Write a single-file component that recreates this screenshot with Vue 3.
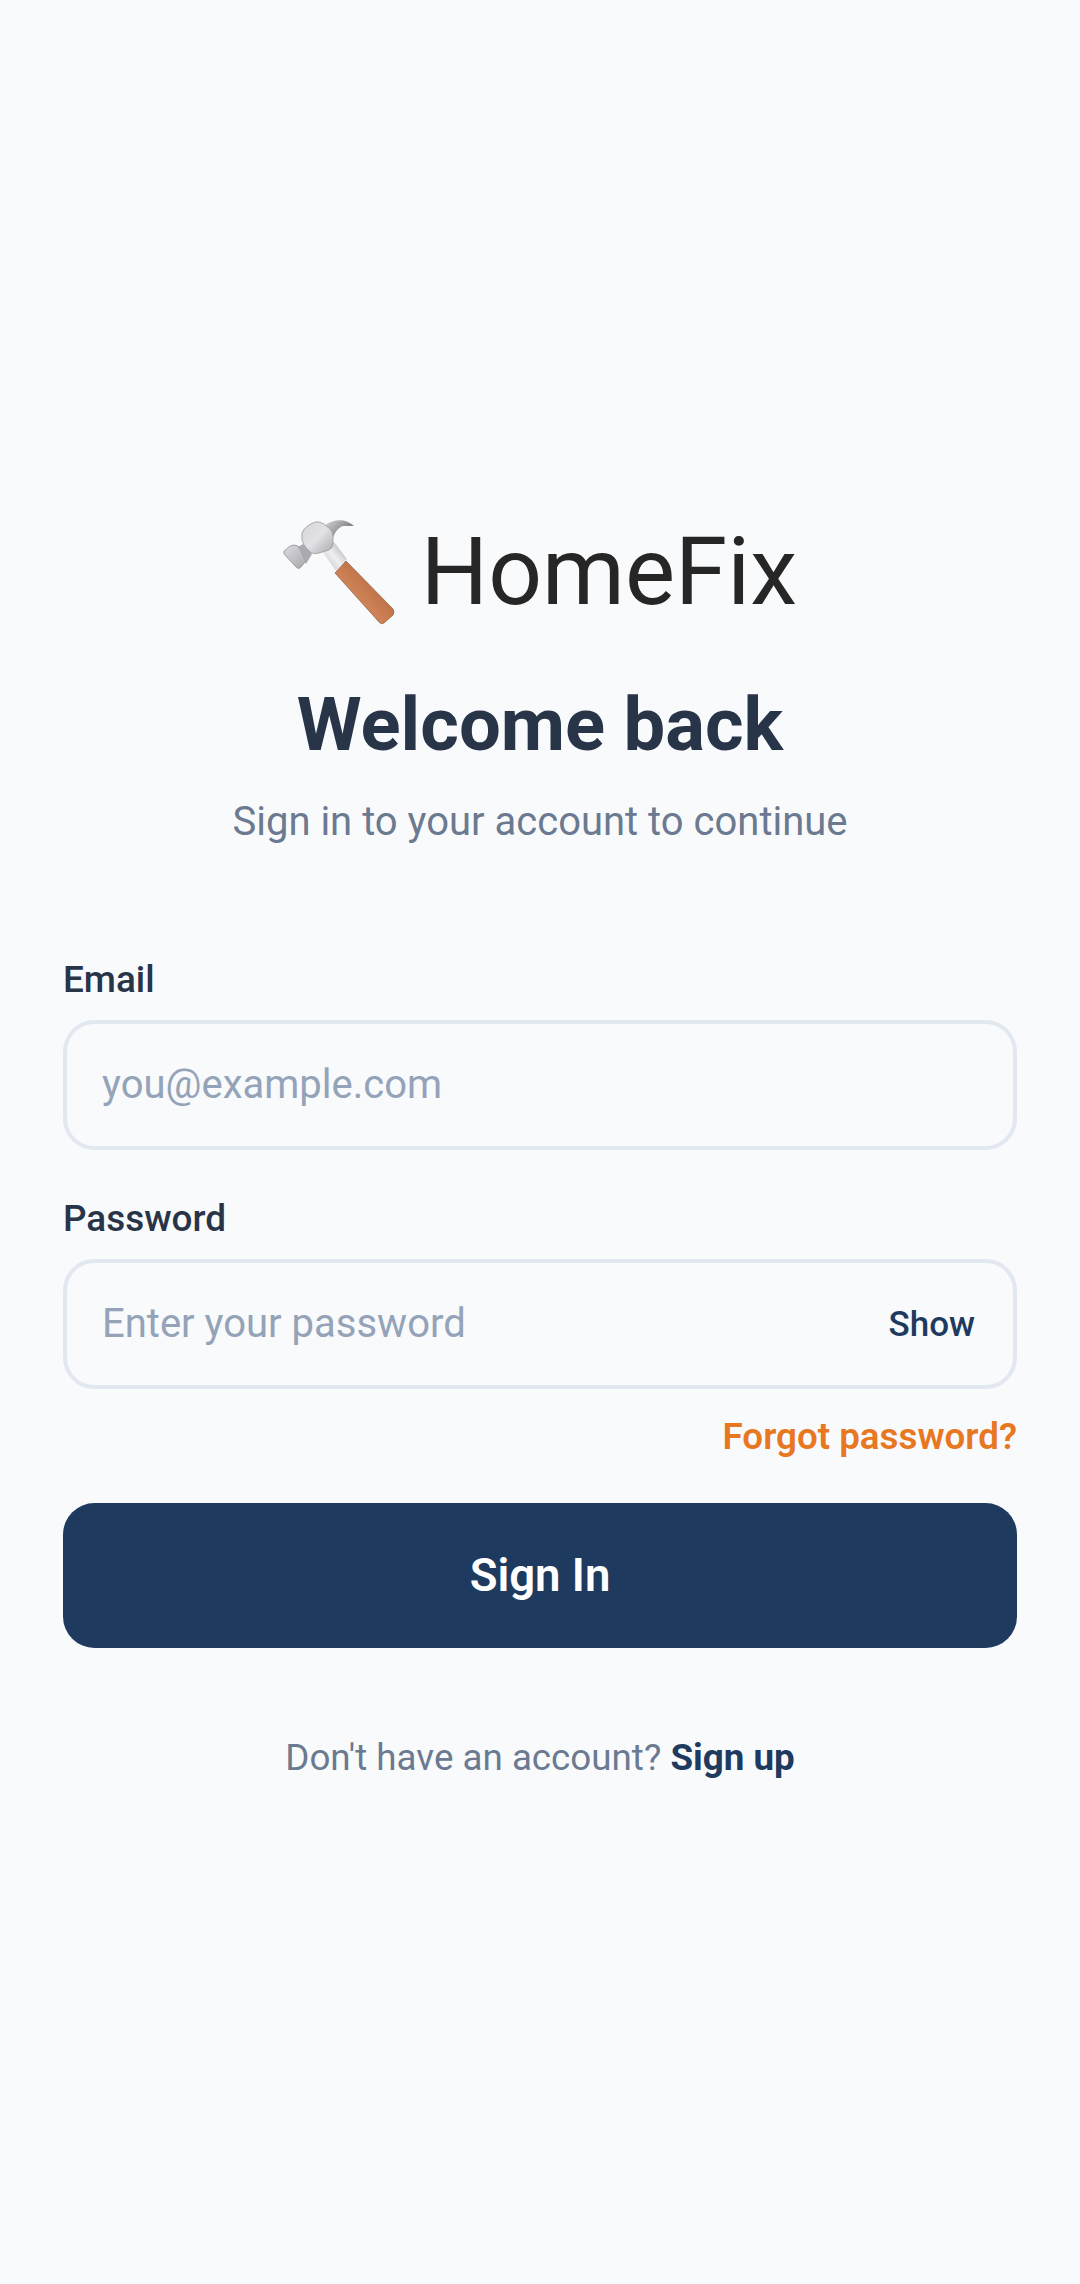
<template>
  <div class="login-page">
    <div class="brand">
      <svg class="brand-icon" viewBox="20 15 120 115" aria-hidden="true">
        <defs>
          <linearGradient id="wood" x1="0" y1="1" x2="1" y2="0">
            <stop offset="0" stop-color="#e3a078" />
            <stop offset="0.5" stop-color="#c97c50" />
            <stop offset="1" stop-color="#a05a36" />
          </linearGradient>
          <linearGradient id="steel" x1="0" y1="0" x2="1" y2="1">
            <stop offset="0" stop-color="#d6d6da" />
            <stop offset="0.5" stop-color="#e2e2e6" />
            <stop offset="1" stop-color="#a8a8ae" />
          </linearGradient>
          <linearGradient id="face" x1="0" y1="0" x2="1" y2="1">
            <stop offset="0" stop-color="#dcdce0" />
            <stop offset="1" stop-color="#a6a6ac" />
          </linearGradient>
          <linearGradient id="neck" x1="0" y1="1" x2="1" y2="0">
            <stop offset="0" stop-color="#bdbdc2" />
            <stop offset="0.5" stop-color="#efeff1" />
            <stop offset="1" stop-color="#9f9fa5" />
          </linearGradient>
          <linearGradient id="claw" x1="0" y1="0" x2="1" y2="0.6">
            <stop offset="0" stop-color="#d4d4d8" />
            <stop offset="1" stop-color="#6f6f75" />
          </linearGradient>
        </defs>
        <path d="M66 26C75 20 87 19 95 27L84 27C79 29 76 33 74 39Z" fill="url(#claw)" />
        <path d="M63 52L75 43L88 60L77 72Z" fill="url(#neck)" />
        <path
          d="M76 74L87 62L134 110Q136 113 134 116L125 124Q122 126 120 123Z"
          fill="url(#wood)"
          stroke="#9c6546"
          stroke-width="0.8"
        />
        <path
          d="M25 52L31 47Q35 45 39 47L47 55Q49 59 47 62L42 68Q40 71 37 68L26 56Q24 54 25 52Z"
          fill="url(#face)"
          stroke="#8f8f95"
          stroke-width="0.8"
        />
        <path d="M39 48L44 45L53 55L47 65Q44 58 39 48Z" fill="#a9a9af" />
        <path
          d="M43 34Q44 30 50 26L56 23Q60 22 65 25L71 30Q74 33 74 38L74 44Q74 49 70 51L60 54Q55 56 51 53L45 46Q42 42 43 34Z"
          fill="url(#steel)"
          stroke="#9a9aa0"
          stroke-width="0.8"
        />
      </svg>
      <span class="brand-name">HomeFix</span>
    </div>
    <h1 class="title">Welcome back</h1>
    <p class="subtitle">Sign in to your account to continue</p>

    <form class="form" @submit.prevent>
      <label class="label" for="email">Email</label>
      <input id="email" class="input" type="email" placeholder="you@example.com" />

      <label class="label label-password" for="password">Password</label>
      <div class="password-wrap">
        <input id="password" class="input" type="password" placeholder="Enter your password" />
        <button class="show-btn" type="button">Show</button>
      </div>

      <a class="forgot">Forgot password?</a>
      <button class="submit" type="submit">Sign In</button>
    </form>

    <p class="footer">Don't have an account? <a class="signup">Sign up</a></p>
  </div>
</template>

<script setup>
</script>

<style scoped>
.login-page {
  box-sizing: border-box;
  min-height: 2284px;
  padding: 15px 63px 0;
  background: #f9fafc;
  display: flex;
  flex-direction: column;
  justify-content: center;
  font-family: Roboto, "Liberation Sans", sans-serif;
}

.brand {
  display: flex;
  justify-content: center;
  align-items: center;
  gap: 22px;
  height: 110px;
  padding-right: 4px;
}

.brand-icon {
  width: 120px;
  height: 115px;
}

.brand-name {
  font-size: 94.5px;
  line-height: 110px;
  color: #262626;
}

.title {
  margin: 56px 0 0;
  font-size: 74.2px;
  line-height: 84px;
  font-weight: 700;
  text-align: center;
  color: #283448;
}

.subtitle {
  margin: 30px 0 0;
  font-size: 40px;
  line-height: 50px;
  text-align: center;
  color: #6b7a90;
}

.form {
  display: flex;
  flex-direction: column;
  margin-top: 111px;
}

.label {
  font-size: 36.9px;
  line-height: 44px;
  font-weight: 500;
  color: #283448;
  margin-bottom: 18px;
}

.label-password {
  margin-top: 47px;
}

.input {
  box-sizing: border-box;
  width: 100%;
  height: 130px;
  padding: 0 35px;
  border: 4px solid #e2e8f0;
  border-radius: 31.5px;
  background: #f8fafc;
  font-family: inherit;
  font-size: 40px;
  color: #283448;
  outline: none;
}

.input::placeholder {
  color: #94a3b8;
  opacity: 1;
}

.password-wrap {
  position: relative;
}

.show-btn {
  position: absolute;
  top: 50%;
  right: 42px;
  transform: translateY(-50%);
  padding: 0;
  border: none;
  background: none;
  font-family: inherit;
  font-size: 35px;
  font-weight: 500;
  color: #1e3a5f;
}

.forgot {
  align-self: flex-end;
  margin-top: 26px;
  font-size: 36.75px;
  line-height: 44px;
  font-weight: 600;
  color: #e87722;
}

.submit {
  height: 145px;
  margin-top: 44px;
  border: none;
  border-radius: 31.5px;
  background: #1e3a5f;
  font-family: inherit;
  font-size: 45.5px;
  font-weight: 600;
  color: #fff;
}

.footer {
  margin: 85px 0 0;
  font-size: 36.75px;
  line-height: 50px;
  text-align: center;
  color: #6b7a90;
}

.signup {
  font-weight: 700;
  color: #1e3a5f;
}
</style>
